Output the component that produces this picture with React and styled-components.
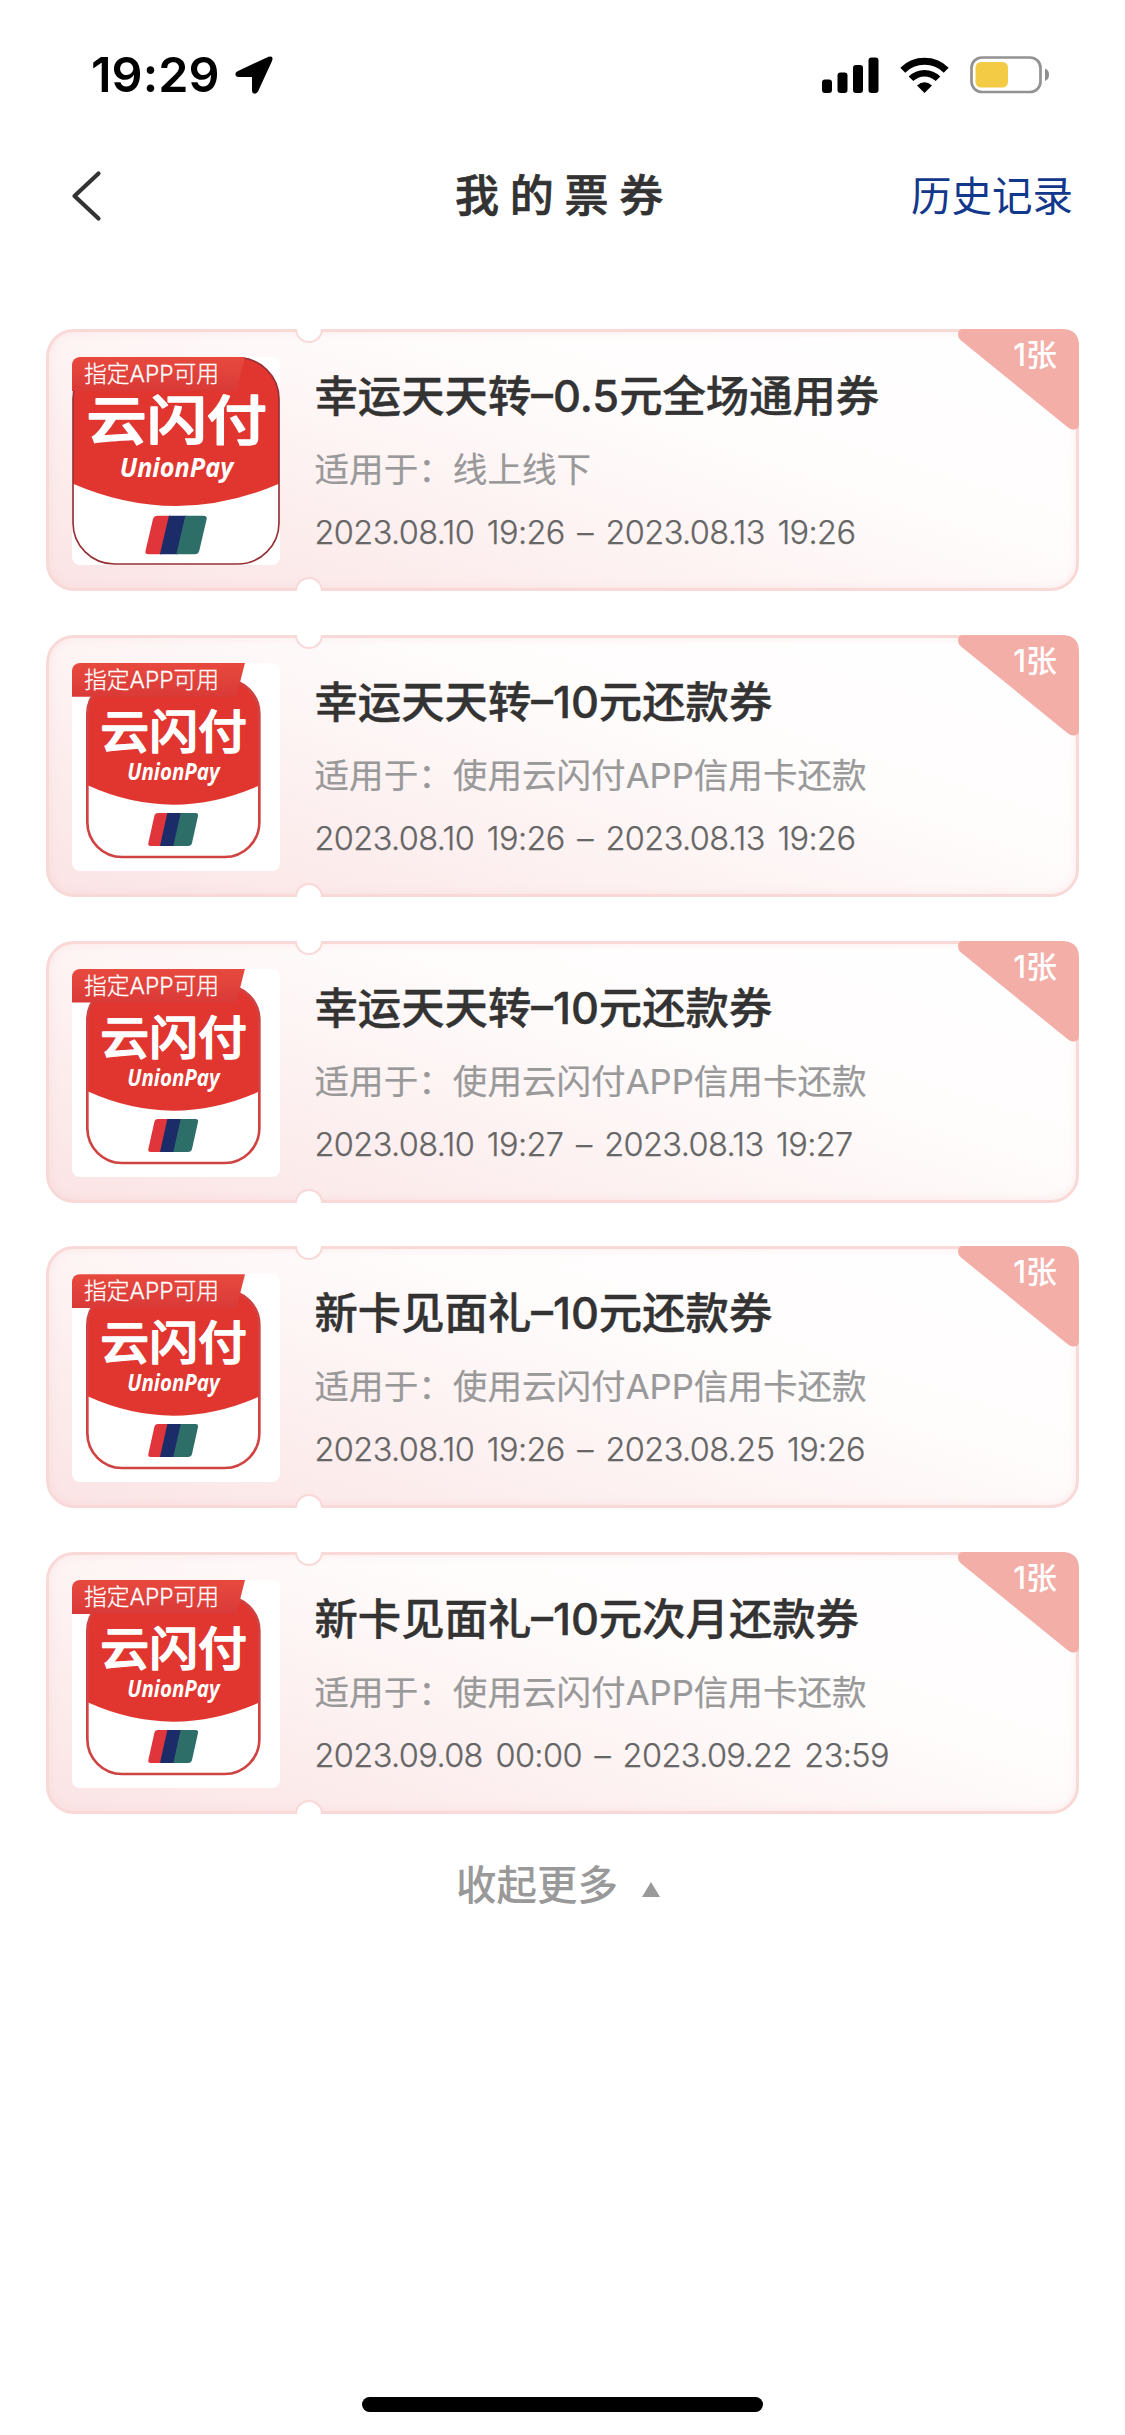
import { useState } from "react";
import styled, { createGlobalStyle } from "styled-components";

const GlobalStyle = createGlobalStyle`
  * {
    box-sizing: border-box;
  }

  body {
    margin: 0;
    background: #ffffff;
    font-family: Inter, "Noto Sans CJK SC", sans-serif;
  }
`;

const Tela = styled.div`
  width: 1125px;
  height: 2435px;
  display: flex;
  flex-direction: column;
  background: #ffffff;
  overflow: hidden;
`;

const StatusBar = styled.div`
  height: 141px;
  padding: 45px 75px 0 91px;
  display: flex;
  justify-content: space-between;
  align-items: flex-start;
`;

const StatusGroup = styled.div`
  height: 60px;
  display: flex;
  align-items: center;
  gap: ${({ gap }) => gap};
`;

const Time = styled.span`
  font-size: 48.5px;
  font-weight: 600;
  line-height: 60px;
  letter-spacing: 0.1px;
  color: #000000;
`;

const Header = styled.header`
  height: 110px;
  padding: 0 52px 0 70px;
  display: grid;
  grid-template-columns: 1fr auto 1fr;
  align-items: center;
`;

const BackButton = styled.button`
  width: 34px;
  height: 54px;
  padding: 0;
  border: none;
  background: none;
  cursor: pointer;
`;

const Title = styled.h1`
  margin: 0;
  padding-right: 14px;
  font-size: 44px;
  font-weight: 500;
  line-height: 60px;
  letter-spacing: 10.8px;
  color: #333333;
  -webkit-text-stroke: 0.7px #333333;
`;

const HistoryLink = styled.a`
  justify-self: end;
  padding-top: 2px;
  font-size: 40.5px;
  line-height: 60px;
  color: #12388c;
`;

const List = styled.main`
  padding: 78px 46px 0;
  display: flex;
  flex-direction: column;
  gap: 43.75px;
`;

const Card = styled.article`
  position: relative;
  height: 262px;
  padding: 25px 23px;
  display: flex;
  gap: 34.5px;
  border: 3px solid #f9d8d8;
  border-radius: 28px;
  background: linear-gradient(18deg, #fbe4e5 0%, #fdf1f1 34%, #fffcfc 62%, #ffffff 100%);
  box-shadow: inset 0 0 9px rgba(247, 200, 200, 0.35);
`;

const Notch = styled.span`
  position: absolute;
  left: 246px;
  width: 28px;
  height: 14px;
  background: #ffffff;
  border: 2.5px solid #f9d8d8;
  ${({ side }) =>
    side === "top"
      ? "top: -3px; border-top: none; border-radius: 0 0 14px 14px;"
      : "bottom: -3px; border-bottom: none; border-radius: 14px 14px 0 0;"}
`;

const Thumb = styled.div`
  position: relative;
  flex: none;
  width: 208px;
  height: 208px;
  border-radius: 8px;
  background: #ffffff;
  overflow: hidden;
`;

const Tag = styled.span`
  position: absolute;
  top: 0;
  left: 0;
  width: 173px;
  height: 34px;
  padding-left: 12px;
  background: linear-gradient(180deg, #e8493e, #d93a37);
  clip-path: polygon(0 0, 100% 0, 95% 100%, 0 100%);
  font-size: 22.8px;
  font-weight: 300;
  line-height: 33px;
  white-space: nowrap;
  color: #ffffff;
  -webkit-text-stroke: 0.3px #ffffff;
`;

const Info = styled.div`
  padding-top: 9px;
  display: flex;
  flex-direction: column;
  white-space: nowrap;
`;

const Name = styled.h2`
  margin: 0 0 18px;
  font-size: 43.35px;
  font-weight: 500;
  line-height: 60px;
  color: #333333;
  -webkit-text-stroke: 0.4px #333333;
`;

const Usage = styled.p`
  margin: 0 0 15px;
  font-size: 34.6px;
  line-height: 50px;
  color: #999999;
  -webkit-text-stroke: 0.2px #999999;
`;

const Period = styled.p`
  margin: 0;
  font-size: 32.5px;
  font-weight: 300;
  line-height: 48px;
  letter-spacing: -0.6px;
  word-spacing: 4px;
  color: #666666;
  -webkit-text-stroke: 0.25px #666666;
`;

const Ribbon = styled.div`
  position: absolute;
  top: -3px;
  right: -3px;
  width: 121px;
  height: 101px;

  svg {
    display: block;
  }
`;

const Count = styled.span`
  position: absolute;
  top: 6px;
  right: 22px;
  font-size: 31px;
  font-weight: 500;
  line-height: 40px;
  color: #ffffff;
`;

const More = styled.button`
  align-self: center;
  height: 60px;
  margin-top: 42px;
  margin-right: 9px;
  padding: 0;
  display: flex;
  align-items: center;
  gap: 24px;
  border: none;
  background: none;
  font-family: inherit;
  font-size: 40.5px;
  font-weight: 500;
  line-height: 60px;
  color: #999999;
  cursor: pointer;
`;

const Triangle = styled.span`
  margin-top: 6px;
  border: 9px solid transparent;
  border-top: none;
  border-bottom: 15px solid #999999;
  transform: ${({ $aberto }) => ($aberto ? "none" : "rotate(180deg)")};
`;

const HomeBar = styled.div`
  width: 401px;
  height: 15px;
  margin: auto auto 23px;
  border-radius: 8px;
  background: #000000;
`;

const coupons = [
  {
    name: "幸运天天转–0.5元全场通用券",
    usage: "线上线下",
    period: "2023.08.10 19:26 – 2023.08.13 19:26",
    large: true,
  },
  {
    name: "幸运天天转–10元还款券",
    usage: "使用云闪付APP信用卡还款",
    period: "2023.08.10 19:26 – 2023.08.13 19:26",
  },
  {
    name: "幸运天天转–10元还款券",
    usage: "使用云闪付APP信用卡还款",
    period: "2023.08.10 19:27 – 2023.08.13 19:27",
  },
  {
    name: "新卡见面礼–10元还款券",
    usage: "使用云闪付APP信用卡还款",
    period: "2023.08.10 19:26 – 2023.08.25 19:26",
  },
  {
    name: "新卡见面礼–10元次月还款券",
    usage: "使用云闪付APP信用卡还款",
    period: "2023.09.08 00:00 – 2023.09.22 23:59",
  },
];

function Logo({ large }) {
  const id = large ? "logo-large" : "logo-small";
  const box = large
    ? { x: 3, y: 2, width: 618, height: 619, rx: 124 }
    : { x: 46, y: 49, width: 516, height: 533, rx: 104 };
  // parte vermelha com a curva embaixo
  const red = large
    ? "M0 0H624V379Q468 447 312 447T0 379Z"
    : "M40 40H570V364Q436 425 304 425T40 364Z";

  return (
    <svg width="208" height="208" viewBox="0 0 624 624">
      <clipPath id={id}>
        <rect {...box} />
      </clipPath>
      <path d={red} fill="#e0362f" clipPath={`url(#${id})`} />
      <rect
        {...box}
        fill="none"
        stroke={large ? "#963034" : "#cf4343"}
        strokeWidth={large ? 5 : 8}
      />
      <g transform={large ? "matrix(1.23 0 0 1.167 -61 -49)" : undefined}>
        <text
          x="85"
          y="256"
          fontFamily="Noto Sans CJK SC"
          fontSize="138"
          fontWeight="500"
          textLength="440"
          lengthAdjust="spacingAndGlyphs"
          fill="#fff"
          stroke="#fff"
          strokeWidth="4"
          strokeLinejoin="round"
        >
          云闪付
        </text>
        <text
          x="166"
          y="351"
          fontFamily="Open Sans"
          fontSize="68"
          fontStyle="italic"
          fontWeight="700"
          textLength="277"
          lengthAdjust="spacingAndGlyphs"
          fill="#fff"
        >
          UnionPay
        </text>
        <path d="M258 450H290L268 549H236Q227 549 229 540L247 459Q249 450 258 450Z" fill="#e0353b" />
        <path d="M286 450H330L308 549H264Z" fill="#1b2c68" />
        <path d="M326 450H370Q380 450 378 459L360 540Q358 549 348 549H304Z" fill="#2d6f68" />
      </g>
    </svg>
  );
}

function Coupon({ name, usage, period, large }) {
  return (
    <Card>
      <Notch side="top" />
      <Notch side="bottom" />
      <Thumb>
        <Logo large={large} />
        <Tag>指定APP可用</Tag>
      </Thumb>
      <Info>
        <Name>{name}</Name>
        <Usage>适用于：{usage}</Usage>
        <Period>{period}</Period>
      </Info>
      <Ribbon>
        <svg width="121" height="101" viewBox="0 0 121 101">
          <path
            d="M5 0H104Q121 0 121 17V95Q121 100 116 100.500Q113 101 110 98.500L3 11.500Q0 9 0 5.500Q0 0 5 0Z"
            fill="#f3aea8"
          />
        </svg>
        <Count>1张</Count>
      </Ribbon>
    </Card>
  );
}

function StatusIcons() {
  return (
    <StatusGroup gap="21px">
      <svg width="57" height="36" viewBox="0 0 57 36">
        <rect x="0" y="22.500" width="10" height="13.500" rx="3" />
        <rect x="15.500" y="15.500" width="10" height="20.500" rx="3" />
        <rect x="31" y="8" width="10" height="28" rx="3" />
        <rect x="46.500" y="0.500" width="10" height="35.500" rx="3" />
      </svg>
      <svg width="49" height="36" viewBox="0 0 49 36">
        <g fill="none" stroke="#000">
          <path d="M2.800 13.200A31 31 0 0 1 46.200 13.200" strokeWidth="7" />
          <path d="M11 21.800A19 19 0 0 1 38 21.800" strokeWidth="6.500" />
        </g>
        <path d="M24.500 36L17 28.500Q24.500 22 32 28.500Z" />
      </svg>
      <svg width="80" height="38" viewBox="0 0 80 38">
        <rect x="1.500" y="1.500" width="69" height="34.500" rx="10.500" fill="none" stroke="#929292" strokeWidth="2.700" />
        <rect x="5.500" y="6" width="32.500" height="25.500" rx="5.500" fill="#f4cb45" />
        <path d="M75 12.500Q79 14 79 18.750T75 25Z" fill="#8e8e8e" />
      </svg>
    </StatusGroup>
  );
}

export default function App() {
  const [aberto, setAberto] = useState(true);
  const visible = aberto ? coupons : coupons.slice(0, 3);

  return (
    <Tela>
      <GlobalStyle />
      <StatusBar>
        <StatusGroup gap="15px">
          <Time>19:29</Time>
          <svg width="38" height="38" viewBox="0 0 38 38">
            <path d="M33.500 0.800Q39 -0.800 37 5L23 35.500Q21.500 38.200 19 37.500Q17 37 17 34.500V21H3.500Q1 21 0.500 19Q0 16.500 2.500 15.200Z" />
          </svg>
        </StatusGroup>
        <StatusIcons />
      </StatusBar>
      <Header>
        <BackButton aria-label="返回">
          <svg width="34" height="54" viewBox="0 0 34 54">
            <path
              d="M28.500 4.500L4.500 27L28.500 49.500"
              fill="none"
              stroke="#333"
              strokeWidth="4.200"
              strokeLinecap="round"
              strokeLinejoin="round"
            />
          </svg>
        </BackButton>
        <Title>我的票券</Title>
        <HistoryLink>历史记录</HistoryLink>
      </Header>
      <List>
        {visible.map((coupon, i) => (
          <Coupon key={i} {...coupon} />
        ))}
      </List>
      <More onClick={() => setAberto(!aberto)}>
        {aberto ? "收起更多" : "查看更多"}
        <Triangle $aberto={aberto} />
      </More>
      <HomeBar />
    </Tela>
  );
}
